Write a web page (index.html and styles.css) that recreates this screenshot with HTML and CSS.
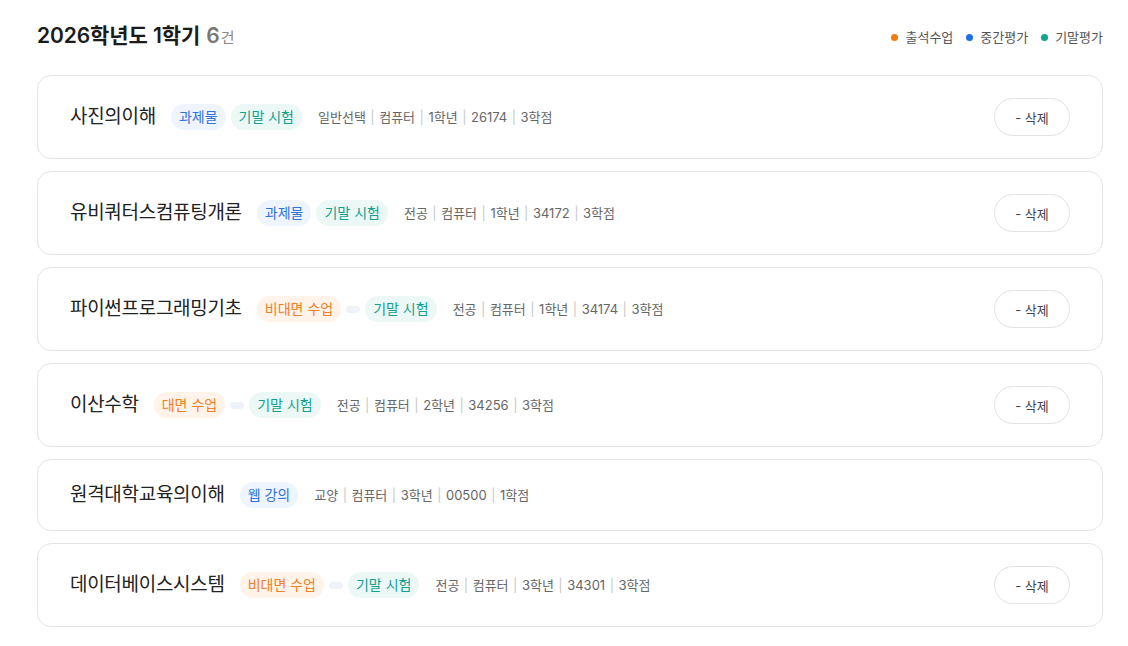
FILE: index.html
```html
<!DOCTYPE html>
<html lang="ko">
<head>
<meta charset="utf-8">
<link rel="stylesheet" href="styles.css">
</head>
<body>
<div class="page">
  <div class="header">
    <h1 class="title">2026학년도 1학기 <span class="count">6</span><span class="unit">건</span></h1>
    <div class="legend">
      <span class="legend-item"><i class="dot dot-orange"></i>출석수업</span>
      <span class="legend-item"><i class="dot dot-blue"></i>중간평가</span>
      <span class="legend-item"><i class="dot dot-teal"></i>기말평가</span>
    </div>
  </div>
  <div class="list">
    <div class="card">
      <div class="info">
        <span class="name">사진의이해</span>
        <span class="badges"><span class="badge blue">과제물</span><span class="badge teal">기말 시험</span></span>
        <span class="meta">일반선택<i class="sep">|</i>컴퓨터<i class="sep">|</i>1학년<i class="sep">|</i>26174<i class="sep">|</i>3학점</span>
      </div>
      <button class="del">- 삭제</button>
    </div>
    <div class="card">
      <div class="info">
        <span class="name">유비쿼터스컴퓨팅개론</span>
        <span class="badges"><span class="badge blue">과제물</span><span class="badge teal">기말 시험</span></span>
        <span class="meta">전공<i class="sep">|</i>컴퓨터<i class="sep">|</i>1학년<i class="sep">|</i>34172<i class="sep">|</i>3학점</span>
      </div>
      <button class="del">- 삭제</button>
    </div>
    <div class="card">
      <div class="info">
        <span class="name">파이썬프로그래밍기초</span>
        <span class="badges"><span class="badge orange">비대면 수업</span><span class="badge empty"></span><span class="badge teal">기말 시험</span></span>
        <span class="meta">전공<i class="sep">|</i>컴퓨터<i class="sep">|</i>1학년<i class="sep">|</i>34174<i class="sep">|</i>3학점</span>
      </div>
      <button class="del">- 삭제</button>
    </div>
    <div class="card">
      <div class="info">
        <span class="name">이산수학</span>
        <span class="badges"><span class="badge orange">대면 수업</span><span class="badge empty"></span><span class="badge teal">기말 시험</span></span>
        <span class="meta">전공<i class="sep">|</i>컴퓨터<i class="sep">|</i>2학년<i class="sep">|</i>34256<i class="sep">|</i>3학점</span>
      </div>
      <button class="del">- 삭제</button>
    </div>
    <div class="card">
      <div class="info">
        <span class="name">원격대학교육의이해</span>
        <span class="badges"><span class="badge blue">웹 강의</span></span>
        <span class="meta">교양<i class="sep">|</i>컴퓨터<i class="sep">|</i>3학년<i class="sep">|</i>00500<i class="sep">|</i>1학점</span>
      </div>
    </div>
    <div class="card">
      <div class="info">
        <span class="name">데이터베이스시스템</span>
        <span class="badges"><span class="badge orange">비대면 수업</span><span class="badge empty"></span><span class="badge teal">기말 시험</span></span>
        <span class="meta">전공<i class="sep">|</i>컴퓨터<i class="sep">|</i>3학년<i class="sep">|</i>34301<i class="sep">|</i>3학점</span>
      </div>
      <button class="del">- 삭제</button>
    </div>
  </div>
</div>
</body>
</html>
```
FILE: styles.css
```css
* { box-sizing: border-box; }
html, body { margin: 0; padding: 0; background: #fff; }
body {
  font-family: Inter, "Noto Sans CJK KR", "Noto Sans", sans-serif;
  color: #222;
}
.page {
  padding: 23px 25px 0 37px;
}
.header {
  display: flex;
  justify-content: space-between;
  align-items: center;
  height: 28px;
  margin-bottom: 24px;
}
.title {
  margin: 0;
  font-size: 21px;
  font-weight: 600;
  color: #1b1b1b;
  letter-spacing: -0.1px;
  line-height: 28px;
}
.count {
  color: #777;
  font-weight: 600;
  margin-left: 1px;
}
.unit {
  color: #888;
  font-size: 15px;
  font-weight: 400;
  margin-left: 1px;
}
.legend {
  display: flex;
  gap: 13px;
  font-size: 13px;
  color: #555;
  line-height: 18px;
}
.legend-item {
  display: flex;
  align-items: center;
  gap: 7px;
}
.dot {
  width: 7px;
  height: 7px;
  border-radius: 50%;
  display: inline-block;
}
.dot-orange { background: #f47b10; }
.dot-blue { background: #1d6fe8; }
.dot-teal { background: #12a392; }
.list {
  display: flex;
  flex-direction: column;
  gap: 12px;
}
.card {
  display: flex;
  align-items: center;
  justify-content: space-between;
  border: 1px solid #e5e5e5;
  border-radius: 14px;
  padding: 22px 32px;
}
.info {
  display: flex;
  align-items: center;
  height: 26px;
}
.name {
  font-size: 19px;
  color: #222;
  letter-spacing: -0.3px;
  margin-right: 15px;
  line-height: 26px;
}
.badges {
  display: flex;
  align-items: center;
  gap: 5px;
  margin-right: 16px;
}
.badge {
  display: inline-flex;
  align-items: center;
  height: 26px;
  padding: 0 8px;
  border-radius: 13px;
  font-size: 14px;
  line-height: 26px;
}
.badge.blue { background: #eff5fe; color: #2f74d8; }
.badge.teal { background: #ebf8f6; color: #14a08f; }
.badge.orange { background: #fff3ea; color: #f28024; }
.badge.empty {
  background: #eef3fa;
  height: 7px;
  width: 14px;
  padding: 0;
  border-radius: 4px;
}
.meta {
  font-size: 13px;
  color: #666;
  display: flex;
  align-items: center;
  line-height: 26px;
}
.sep {
  font-style: normal;
  color: #c8c8c8;
  margin: 0 4.5px;
  font-size: 13px;
}
.del {
  font-family: inherit;
  background: #fff;
  border: 1px solid #e2e2e2;
  border-radius: 19px;
  width: 76px;
  height: 38px;
  font-size: 13px;
  color: #444;
  cursor: pointer;
  padding: 0;
}
```
